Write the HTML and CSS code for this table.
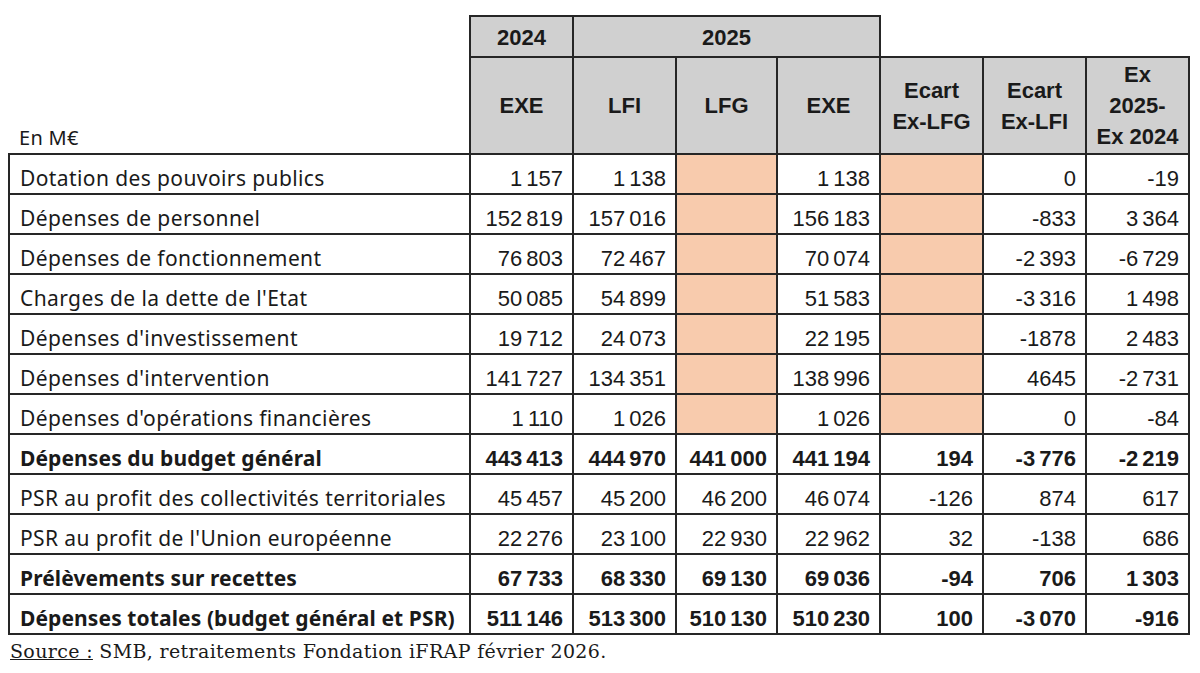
FILE: index.html
```html
<!DOCTYPE html>
<html lang="fr">
<head>
<meta charset="utf-8">
<title>Dépenses</title>
<link rel="stylesheet" href="styles.css">
</head>
<body>
<div class="page">
<table class="budget">
  <colgroup>
    <col class="c-label"><col class="c-num"><col class="c-num"><col class="c-num c-narrow"><col class="c-num"><col class="c-num"><col class="c-num"><col class="c-num">
  </colgroup>
  <thead>
    <tr class="hr1">
      <th class="blank"></th>
      <th class="gray">2024</th>
      <th class="gray" colspan="3">2025</th>
      <th class="blank" colspan="3"></th>
    </tr>
    <tr class="hr2">
      <th class="unit">En M€</th>
      <th class="gray">EXE</th>
      <th class="gray">LFI</th>
      <th class="gray">LFG</th>
      <th class="gray">EXE</th>
      <th class="gray top">Ecart<br>Ex-LFG</th>
      <th class="gray top">Ecart<br>Ex-LFI</th>
      <th class="gray top">Ex<br>2025-<br>Ex 2024</th>
    </tr>
  </thead>
  <tbody>
    <tr><td class="lbl">Dotation des pouvoirs publics</td><td>1 157</td><td>1 138</td><td class="peach"></td><td>1 138</td><td class="peach"></td><td>0</td><td>-19</td></tr>
    <tr><td class="lbl">Dépenses de personnel</td><td>152 819</td><td>157 016</td><td class="peach"></td><td>156 183</td><td class="peach"></td><td>-833</td><td>3 364</td></tr>
    <tr><td class="lbl">Dépenses de fonctionnement</td><td>76 803</td><td>72 467</td><td class="peach"></td><td>70 074</td><td class="peach"></td><td>-2 393</td><td>-6 729</td></tr>
    <tr><td class="lbl">Charges de la dette de l'Etat</td><td>50 085</td><td>54 899</td><td class="peach"></td><td>51 583</td><td class="peach"></td><td>-3 316</td><td>1 498</td></tr>
    <tr><td class="lbl">Dépenses d'investissement</td><td>19 712</td><td>24 073</td><td class="peach"></td><td>22 195</td><td class="peach"></td><td>-1878</td><td>2 483</td></tr>
    <tr><td class="lbl">Dépenses d'intervention</td><td>141 727</td><td>134 351</td><td class="peach"></td><td>138 996</td><td class="peach"></td><td>4645</td><td>-2 731</td></tr>
    <tr><td class="lbl">Dépenses d'opérations financières</td><td>1 110</td><td>1 026</td><td class="peach"></td><td>1 026</td><td class="peach"></td><td>0</td><td>-84</td></tr>
    <tr class="bold"><td class="lbl">Dépenses du budget général</td><td>443 413</td><td>444 970</td><td>441 000</td><td>441 194</td><td>194</td><td>-3 776</td><td>-2 219</td></tr>
    <tr><td class="lbl">PSR au profit des collectivités territoriales</td><td>45 457</td><td>45 200</td><td>46 200</td><td>46 074</td><td>-126</td><td>874</td><td>617</td></tr>
    <tr><td class="lbl">PSR au profit de l'Union européenne</td><td>22 276</td><td>23 100</td><td>22 930</td><td>22 962</td><td>32</td><td>-138</td><td>686</td></tr>
    <tr class="bold"><td class="lbl">Prélèvements sur recettes</td><td>67 733</td><td>68 330</td><td>69 130</td><td>69 036</td><td>-94</td><td>706</td><td>1 303</td></tr>
    <tr class="bold"><td class="lbl">Dépenses totales (budget général et PSR)</td><td>511 146</td><td>513 300</td><td>510 130</td><td>510 230</td><td>100</td><td>-3 070</td><td>-916</td></tr>
  </tbody>
</table>
<p class="source"><span class="src-label">Source :</span> SMB, retraitements Fondation iFRAP février 2026.</p>
</div>
</body>
</html>
```

FILE: styles.css
```css
html, body {
  margin: 0;
  padding: 0;
  background: #ffffff;
}

.page {
  padding: 15px 0 0 8px;
}

.budget {
  border-collapse: collapse;
  table-layout: fixed;
  width: 1180px;
  color: #1a1a1a;
}

.c-label { width: 461px; }
.c-num { width: 103px; }
.c-narrow { width: 101px; }

.budget th,
.budget td {
  padding: 0;
  border: 2px solid #262626;
}

.budget th {
  font-family: "Liberation Sans", Arial, sans-serif;
  font-weight: bold;
  font-size: 22px;
  text-align: center;
  vertical-align: middle;
}

.hr1 { height: 41px; }
.hr1 th { line-height: 25px; padding-top: 2px; }
.hr2 { height: 97px; }
.hr2 th { line-height: 31px; }

.budget th.blank {
  border: none;
  border-bottom: 2px solid #262626;
}
.hr1 th.blank:first-child { border-bottom: none; }

.budget th.unit {
  border-top: none;
  border-left: none;
  font-family: "Noto Sans", sans-serif;
  font-weight: normal;
  font-size: 20px;
  letter-spacing: 0.3px;
  text-align: left;
  vertical-align: bottom;
  padding: 0 0 3px 10px;
  line-height: 25px;
}

.gray { background: #d0d0d0; }
.peach { background: #f8cbad; }

.budget tbody tr { height: 40px; }

.budget td {
  font-family: "Liberation Sans", Arial, sans-serif;
  font-size: 22px;
  line-height: 25px;
  text-align: right;
  vertical-align: bottom;
  padding: 0 9px 2px 0;
  word-spacing: -2px;
  white-space: nowrap;
}

.budget td.lbl {
  font-family: "Noto Sans", sans-serif;
  font-size: 21px;
  letter-spacing: 0.4px;
  line-height: 26px;
  text-align: left;
  padding: 0 0 2px 10px;
  word-spacing: 0;
}

.bold td { font-weight: bold; }
.bold td.lbl { letter-spacing: 0.1px; }

.source {
  margin: 5px 0 0 2px;
  font-family: "DejaVu Serif", serif;
  font-size: 19px;
  letter-spacing: 0.35px;
  color: #1a1a1a;
  line-height: 23px;
}

.src-label { text-decoration: underline; }
```
